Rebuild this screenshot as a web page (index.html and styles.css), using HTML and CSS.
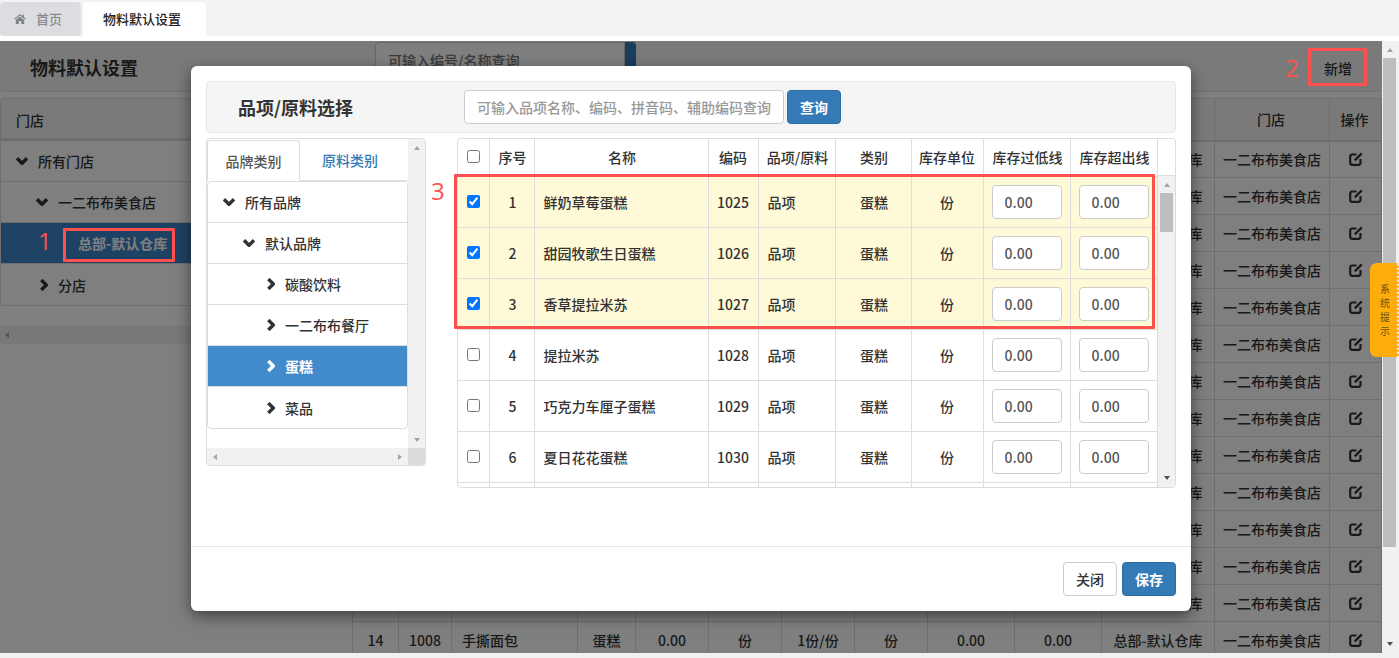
FILE: index.html
```html
<!DOCTYPE html>
<html lang="zh-CN">
<head>
  <meta charset="UTF-8">
  <meta name="viewport" content="width=device-width, initial-scale=1.0">
  <title>物料默认设置</title>
  <link rel="stylesheet" href="styles.css">
</head>
<body>
  <svg class="sprites" width="0" height="0" aria-hidden="true">
    <symbol id="chev-down" viewBox="0 0 12 8"><path d="M1 1.300 6 6.300l5-5" fill="none" stroke="currentColor" stroke-width="3.400"/></symbol>
    <symbol id="chev-right" viewBox="0 0 8 12"><path d="M1.300 1 6.300 6l-5 5" fill="none" stroke="currentColor" stroke-width="3.400"/></symbol>
    <symbol id="edit" viewBox="0 0 14 14"><path d="M7.500 2.500H3.200A2 2 0 0 0 1.200 4.500v6.300a2 2 0 0 0 2 2h6.300a2 2 0 0 0 2-2V7" fill="none" stroke="currentColor" stroke-width="2.200"/><path d="M5.800 8.400 12.800 1.400" fill="none" stroke="currentColor" stroke-width="2.200"/></symbol>
  </svg>

  <div class="app">
    <nav class="tabs">
      <a class="tab tab-home">
        <svg class="home-icon" viewBox="0 0 12 10"><path d="M6 0 0 5l.7.8L6 1.400l5.300 4.400.7-.8-2-1.700V.8H8.500v1.300zM1.800 6v4h3V7h2.400v3h3V6L6 2.500z" fill="currentColor"/></svg>
        首页
      </a>
      <a class="tab tab-active">物料默认设置</a>
    </nav>

    <div class="workspace">
      <main class="page">
        <header class="page-head">
          <h1>物料默认设置</h1>
          <div class="page-search">可输入编号/名称查询</div>
          <button class="page-search-btn"></button>
          <button class="add-btn">新增</button>
        </header>

        <div class="page-body">
          <section class="store-col">
            <div class="store-title">门店</div>
            <ul class="store-tree">
              <li><svg class="chev-d"><use href="#chev-down"/></svg>所有门店</li>
              <li class="lvl-1"><svg class="chev-d"><use href="#chev-down"/></svg>一二布布美食店</li>
              <li class="lvl-2 selected">总部-默认仓库</li>
              <li class="lvl-1b"><svg class="chev-r"><use href="#chev-right"/></svg>分店</li>
            </ul>
            <div class="store-scroll"><i class="arrow arrow-left"></i></div>
          </section>

          <table class="data-table">
            <colgroup>
              <col class="c46"><col class="c53"><col class="c126"><col class="c58"><col class="c73"><col class="c73"><col class="c73"><col class="c73"><col class="c87"><col class="c87"><col class="c113"><col class="c115"><col class="c52">
            </colgroup>
            <thead>
              <tr><th>序号</th><th>编码</th><th>名称</th><th>类别</th><th>库存</th><th>单位</th><th>规格</th><th>单位</th><th>过低线</th><th>超出线</th><th>仓库</th><th class="nudge">门店</th><th class="nudge">操作</th></tr>
            </thead>
            <tbody>
              <tr><td colspan="10"></td><td>总部-默认仓库</td><td>一二布布美食店</td><td><svg class="edit"><use href="#edit"/></svg></td></tr>
              <tr><td colspan="10"></td><td>总部-默认仓库</td><td>一二布布美食店</td><td><svg class="edit"><use href="#edit"/></svg></td></tr>
              <tr><td colspan="10"></td><td>总部-默认仓库</td><td>一二布布美食店</td><td><svg class="edit"><use href="#edit"/></svg></td></tr>
              <tr><td colspan="10"></td><td>总部-默认仓库</td><td>一二布布美食店</td><td><svg class="edit"><use href="#edit"/></svg></td></tr>
              <tr><td colspan="10"></td><td>总部-默认仓库</td><td>一二布布美食店</td><td><svg class="edit"><use href="#edit"/></svg></td></tr>
              <tr><td colspan="10"></td><td>总部-默认仓库</td><td>一二布布美食店</td><td><svg class="edit"><use href="#edit"/></svg></td></tr>
              <tr><td colspan="10"></td><td>总部-默认仓库</td><td>一二布布美食店</td><td><svg class="edit"><use href="#edit"/></svg></td></tr>
              <tr><td colspan="10"></td><td>总部-默认仓库</td><td>一二布布美食店</td><td><svg class="edit"><use href="#edit"/></svg></td></tr>
              <tr><td colspan="10"></td><td>总部-默认仓库</td><td>一二布布美食店</td><td><svg class="edit"><use href="#edit"/></svg></td></tr>
              <tr><td colspan="10"></td><td>总部-默认仓库</td><td>一二布布美食店</td><td><svg class="edit"><use href="#edit"/></svg></td></tr>
              <tr><td colspan="10"></td><td>总部-默认仓库</td><td>一二布布美食店</td><td><svg class="edit"><use href="#edit"/></svg></td></tr>
              <tr><td colspan="10"></td><td>总部-默认仓库</td><td>一二布布美食店</td><td><svg class="edit"><use href="#edit"/></svg></td></tr>
              <tr><td></td><td></td><td></td><td></td><td></td><td></td><td></td><td></td><td></td><td></td><td>总部-默认仓库</td><td>一二布布美食店</td><td><svg class="edit"><use href="#edit"/></svg></td></tr>
              <tr><td>14</td><td>1008</td><td class="left">手撕面包</td><td>蛋糕</td><td>0.00</td><td>份</td><td>1份/份</td><td>份</td><td>0.00</td><td>0.00</td><td>总部-默认仓库</td><td>一二布布美食店</td><td><svg class="edit"><use href="#edit"/></svg></td></tr>
            </tbody>
          </table>
        </div>
      </main>

      <div class="page-scroll">
        <i class="arrow arrow-up"></i>
        <div class="page-thumb"></div>
        <i class="arrow arrow-down dark"></i>
      </div>
    </div>

    <div class="backdrop"></div>

    <div class="modal">
      <div class="modal-body">
        <div class="search-panel">
          <h2>品项/原料选择</h2>
          <input class="search-input" type="text" placeholder="可输入品项名称、编码、拼音码、辅助编码查询">
          <button class="btn btn-primary">查询</button>
        </div>

        <div class="picker">
          <aside class="cat-panel">
            <div class="cat-content">
              <div class="cat-tabs">
                <a class="cat-tab active">品牌类别</a>
                <a class="cat-tab link">原料类别</a>
              </div>
              <ul class="cat-list">
                <li class="l0"><svg class="chev-d"><use href="#chev-down"/></svg>所有品牌</li>
                <li class="l1"><svg class="chev-d"><use href="#chev-down"/></svg>默认品牌</li>
                <li class="l2"><svg class="chev-r"><use href="#chev-right"/></svg>碳酸饮料</li>
                <li class="l2"><svg class="chev-r"><use href="#chev-right"/></svg>一二布布餐厅</li>
                <li class="l2 on"><svg class="chev-r"><use href="#chev-right"/></svg>蛋糕</li>
                <li class="l2"><svg class="chev-r"><use href="#chev-right"/></svg>菜品</li>
              </ul>
            </div>
            <div class="sb-v cat-sb">
              <i class="arrow arrow-up"></i>
              <i class="arrow arrow-down"></i>
            </div>
            <div class="sb-h">
              <i class="arrow arrow-left"></i>
              <i class="arrow arrow-right"></i>
            </div>
            <div class="sb-corner"></div>
          </aside>

          <section class="item-panel">
            <div class="item-clip">
              <table class="item-table">
                <colgroup>
                  <col class="i-check"><col class="i-no"><col class="i-name"><col class="i-code"><col class="i-type"><col class="i-cat"><col class="i-unit"><col class="i-low"><col class="i-high">
                </colgroup>
                <thead>
                  <tr><th><input type="checkbox"></th><th class="pad">序号</th><th class="pad">名称</th><th>编码</th><th class="pad">品项/原料</th><th class="pad">类别</th><th>库存单位</th><th class="pad">库存过低线</th><th class="pad">库存超出线</th></tr>
                </thead>
                <tbody>
                  <tr class="picked"><td><input type="checkbox" checked></td><td class="pad">1</td><td class="left">鲜奶草莓蛋糕</td><td>1025</td><td class="left">品项</td><td class="pad">蛋糕</td><td>份</td><td><input class="num" value="0.00"></td><td><input class="num" value="0.00"></td></tr>
                  <tr class="picked"><td><input type="checkbox" checked></td><td class="pad">2</td><td class="left">甜园牧歌生日蛋糕</td><td>1026</td><td class="left">品项</td><td class="pad">蛋糕</td><td>份</td><td><input class="num" value="0.00"></td><td><input class="num" value="0.00"></td></tr>
                  <tr class="picked"><td><input type="checkbox" checked></td><td class="pad">3</td><td class="left">香草提拉米苏</td><td>1027</td><td class="left">品项</td><td class="pad">蛋糕</td><td>份</td><td><input class="num" value="0.00"></td><td><input class="num" value="0.00"></td></tr>
                  <tr><td><input type="checkbox"></td><td class="pad">4</td><td class="left">提拉米苏</td><td>1028</td><td class="left">品项</td><td class="pad">蛋糕</td><td>份</td><td><input class="num" value="0.00"></td><td><input class="num" value="0.00"></td></tr>
                  <tr><td><input type="checkbox"></td><td class="pad">5</td><td class="left">巧克力车厘子蛋糕</td><td>1029</td><td class="left">品项</td><td class="pad">蛋糕</td><td>份</td><td><input class="num" value="0.00"></td><td><input class="num" value="0.00"></td></tr>
                  <tr><td><input type="checkbox"></td><td class="pad">6</td><td class="left">夏日花花蛋糕</td><td>1030</td><td class="left">品项</td><td class="pad">蛋糕</td><td>份</td><td><input class="num" value="0.00"></td><td><input class="num" value="0.00"></td></tr>
                  <tr><td></td><td></td><td></td><td></td><td></td><td></td><td></td><td></td><td></td></tr>
                </tbody>
              </table>
            </div>
            <div class="item-side">
              <div class="item-side-cap"></div>
              <div class="sb-v item-sb">
                <i class="arrow arrow-up"></i>
                <div class="item-thumb"></div>
                <i class="arrow arrow-down dark"></i>
              </div>
            </div>
          </section>
        </div>
      </div>
      <div class="modal-foot">
        <button class="btn btn-default">关闭</button>
        <button class="btn btn-primary">保存</button>
      </div>
    </div>

    <aside class="sys-tip">系<br>统<br>提<br>示</aside>

    <!-- 标注 -->
    <div class="mark mark-1"></div>
    <div class="mark mark-2"></div>
    <div class="mark mark-3"></div>
    <span class="mark-num num-1">1</span>
    <span class="mark-num num-2">2</span>
    <span class="mark-num num-3">3</span>
  </div>
</body>
</html>
```

FILE: styles.css
```css
* {
  box-sizing: border-box;
}

html, body {
  margin: 0;
  height: 100%;
  overflow: hidden;
}

body {
  font-family: "Noto Sans CJK SC", "Noto Sans", sans-serif;
  font-size: 14px;
  line-height: 20px;
  font-weight: 500;
  color: #333;
  background-color: #f1f1f1;
}

.sprites {
  position: absolute;
}

ul {
  list-style: none;
  margin: 0;
  padding: 0;
}

button, input {
  font-family: inherit;
  font-weight: 500;
}

.app {
  position: relative;
  width: 1399px;
  height: 658px;
  overflow: hidden;
}

/* 顶部标签 */
.tabs {
  display: flex;
  gap: 2px;
  height: 41px;
  padding-top: 2px;
  background-color: #f3f3f3;
  border-bottom: 5px solid #fff;
}

.tab {
  display: flex;
  align-items: center;
  height: 34px;
  font-size: 13px;
  border-radius: 4px 4px 0 0;
}

.tab-home {
  width: 81px;
  padding-left: 14px;
  background-color: #dcdde1;
  color: #8a8a8a;
  border-radius: 4px;
}

.home-icon {
  width: 12px;
  height: 10px;
  margin-right: 10px;
  color: #7f8389;
}

.tab-active {
  width: 123px;
  padding-left: 20px;
  background-color: #fff;
  color: #222;
}

/* 底层页面 */
.workspace {
  display: flex;
  align-items: flex-start;
  height: 612px;
}

.page {
  width: 1382px;
  height: 612px;
  overflow: hidden;
  background-color: #fff;
}

.page-head {
  display: flex;
  height: 51px;
  padding-top: 1px;
  background-color: #f5f5f5;
  border-bottom: 1px solid #e4e4e4;
  border-radius: 0 0 4px 4px;
}

.page-head h1 {
  width: 375px;
  margin: 0;
  padding: 8px 0 0 30px;
  font-size: 18px;
  line-height: 34px;
  font-weight: 700;
}

.page-search {
  width: 250px;
  height: 34px;
  padding: 7px 12px;
  background-color: #fff;
  border: 1px solid #ccc;
  border-radius: 4px 0 0 4px;
  color: #777;
}

.page-search-btn {
  width: 11px;
  height: 34px;
  padding: 0;
  border: none;
  background-color: #337ab7;
  border-radius: 0 4px 4px 0;
}

.add-btn {
  width: 54px;
  height: 34px;
  margin: 9px 17px 0 auto;
  padding: 0;
  font-size: 14px;
  color: #333;
  background-color: transparent;
  border: none;
}

.page-body {
  display: flex;
  gap: 7px;
  margin-top: 6px;
}

.store-col {
  width: 345px;
  flex-shrink: 0;
}

.store-title {
  height: 42px;
  padding: 11px 15px;
  background-color: #f5f5f5;
  border: 1px solid #ddd;
  border-bottom-width: 2px;
  border-radius: 4px 4px 0 0;
}

.store-tree {
  border: 1px solid #ddd;
  border-radius: 0 0 4px 4px;
}

.store-tree li {
  display: flex;
  align-items: center;
  height: 41px;
  padding-left: 15px;
  border-bottom: 1px solid #ddd;
}

.store-tree li:last-child {
  border-bottom: none;
}

.store-tree .lvl-1 {
  padding-left: 35px;
}

.store-tree .lvl-1b {
  padding-left: 39px;
}

.store-tree .lvl-2 {
  padding-left: 77px;
}

.store-tree .selected {
  background-color: #3d85c6;
  color: #fff;
  font-weight: 700;
}

.store-scroll {
  display: flex;
  align-items: center;
  height: 18px;
  margin-top: 20px;
  padding-left: 5px;
  background-color: #f1f1f1;
}

.data-table {
  width: 1029px;
  flex-shrink: 0;
  table-layout: fixed;
  border-collapse: collapse;
}

.data-table th,
.data-table td {
  height: 37px;
  padding: 0;
  font-weight: 500;
  text-align: center;
  border: 1px solid #ddd;
  overflow: hidden;
  white-space: nowrap;
}

.data-table th {
  height: 42px;
  background-color: #f5f5f5;
  border-bottom-width: 2px;
}

.data-table .nudge {
  padding-right: 2px;
}

.data-table .left {
  text-align: left;
  padding-left: 10px;
}

.c46 { width: 46px; }
.c53 { width: 53px; }
.c52 { width: 52px; }
.c58 { width: 58px; }
.c73 { width: 73px; }
.c87 { width: 87px; }
.c113 { width: 113px; }
.c115 { width: 115px; }
.c126 { width: 126px; }

.edit {
  display: block;
  width: 14px;
  height: 14px;
  margin: 0 auto;
  color: #333;
}

.page-scroll {
  display: flex;
  flex-direction: column;
  align-items: center;
  width: 17px;
  height: 612px;
  padding: 7px 2px 0 0;
  background-color: #f1f1f1;
}

.page-thumb {
  width: 13px;
  height: 489px;
  margin: 6px 0 95px;
  background-color: #bdbdbd;
}

/* 滚动条箭头 */
.arrow {
  display: block;
  width: 0;
  height: 0;
  border-style: solid;
  border-color: transparent;
  flex-shrink: 0;
}

.arrow-up {
  border-width: 0 3.5px 4px;
  border-bottom-color: #a3a3a3;
}

.arrow-down {
  border-width: 4px 3.5px 0;
  border-top-color: #a3a3a3;
}

.arrow-left {
  border-width: 3.5px 4px 3.5px 0;
  border-right-color: #a3a3a3;
}

.arrow-right {
  border-width: 3.5px 0 3.5px 4px;
  border-left-color: #a3a3a3;
}

.arrow-down.dark {
  border-top-color: #505050;
}

.backdrop {
  position: absolute;
  top: 41px;
  left: 0;
  width: 1382px;
  height: 612px;
  background-color: rgba(0, 0, 0, 0.5);
}

/* 弹窗 */
.modal {
  position: absolute;
  top: 66px;
  left: 191px;
  width: 1000px;
  height: 545px;
  background-color: #fff;
  border-radius: 6px;
  box-shadow: 0 5px 15px rgba(0, 0, 0, 0.5);
}

.modal-body {
  height: 481px;
  padding: 15px;
  border-bottom: 1px solid #e5e5e5;
}

.search-panel {
  display: flex;
  align-items: center;
  height: 52px;
  background-color: #f5f5f5;
  border: 1px solid #e7e7e7;
  border-radius: 4px;
}

.search-panel h2 {
  width: 257px;
  margin: 0;
  padding-left: 31px;
  font-size: 18px;
  font-weight: 700;
}

.search-input {
  width: 320px;
  height: 34px;
  padding: 6px 12px;
  margin-right: 3px;
  font-size: 14px;
  color: #555;
  background-color: #fff;
  border: 1px solid #ccc;
  border-radius: 4px;
  outline: none;
}

.search-input::placeholder {
  color: #999;
}

.btn {
  width: 54px;
  height: 34px;
  padding: 0;
  font-size: 14px;
  border-radius: 4px;
  border: 1px solid #ccc;
}

.btn-primary {
  color: #fff;
  font-weight: 700;
  background-color: #337ab7;
  border-color: #2e6da4;
}

.btn-default {
  color: #333;
  background-color: #fff;
}

.picker {
  display: flex;
  align-items: flex-start;
  gap: 31px;
  margin-top: 5px;
}

.cat-panel {
  display: grid;
  grid-template-columns: 201px 17px;
  grid-template-rows: 309px 17px;
  width: 220px;
  height: 328px;
  border: 1px solid #ddd;
  border-radius: 4px;
  overflow: hidden;
}

.cat-content {
  padding-top: 1px;
}

.cat-tabs {
  display: flex;
  height: 41px;
  border-bottom: 1px solid #ddd;
}

.cat-tab {
  display: flex;
  align-items: center;
  justify-content: center;
  width: 108px;
  padding-right: 8px;
  color: #555;
}

.cat-tab.active {
  width: 93px;
  height: 41px;
  padding-right: 0;
  border: 1px solid #ddd;
  border-bottom-color: #fff;
  border-radius: 4px 4px 0 0;
}

.cat-tab.link {
  color: #337ab7;
}

.cat-list {
  border: 1px solid #ddd;
  border-radius: 4px;
}

.cat-list li {
  display: flex;
  align-items: center;
  height: 41px;
  border-bottom: 1px solid #ddd;
}

.cat-list li:last-child {
  border-bottom: none;
}

.cat-list .l0 {
  padding-left: 15px;
}

.cat-list .l1 {
  padding-left: 35px;
}

.cat-list .l2 {
  padding-left: 59px;
}

.cat-list .on {
  background-color: #428bca;
  color: #fff;
  font-weight: 700;
}

.chev-d {
  width: 12px;
  height: 8px;
  margin-right: 10px;
  flex-shrink: 0;
}

.chev-r {
  width: 8px;
  height: 12px;
  margin-right: 10px;
  flex-shrink: 0;
}

.sb-v {
  display: flex;
  flex-direction: column;
  align-items: center;
  justify-content: space-between;
  background-color: #f1f1f1;
}

.cat-sb {
  padding: 7px 0 6px;
}

.sb-h {
  display: flex;
  align-items: center;
  justify-content: space-between;
  padding: 0 6px;
  background-color: #f1f1f1;
}

.sb-corner {
  background-color: #dcdcdc;
}

.item-panel {
  display: flex;
  width: 719px;
  height: 350px;
  border: 1px solid #ddd;
  border-radius: 4px;
  overflow: hidden;
}

.item-clip {
  width: 700px;
  height: 348px;
  overflow: hidden;
}

.item-table {
  width: 699px;
  table-layout: fixed;
  border-collapse: collapse;
}

.item-table th,
.item-table td {
  padding: 0;
  font-weight: 500;
  text-align: center;
  border: 1px solid #ddd;
  white-space: nowrap;
}

.item-table tr > :first-child {
  border-left: none;
}

.item-table th {
  height: 37px;
  border-top: none;
  border-bottom-width: 1px;
}

.item-table td {
  height: 51px;
}

.item-table .pad {
  padding-left: 2px;
}

.item-table .left {
  text-align: left;
  padding-left: 9px;
}

.item-table input[type="checkbox"] {
  display: block;
  width: 13px;
  height: 13px;
  margin: -1px 0 0 9px;
}

.picked td {
  background-color: #fef9d7;
}

.num {
  display: block;
  width: 70px;
  height: 34px;
  margin: 0 auto;
  padding: 0 12px;
  font-size: 14px;
  color: #555;
  background-color: #fff;
  border: 1px solid #ccc;
  border-radius: 4px;
  outline: none;
}

.i-check { width: 31px; }
.i-no { width: 45px; }
.i-name { width: 174px; }
.i-code { width: 50px; }
.i-type { width: 77px; }
.i-cat { width: 76px; }
.i-unit { width: 72px; }
.i-low { width: 87px; }
.i-high { width: 87px; }

.item-side {
  width: 17px;
}

.item-side-cap {
  height: 37px;
  border-bottom: 1px solid #ddd;
}

.item-sb {
  height: 311px;
  padding: 7px 0 0;
  justify-content: flex-start;
}

.item-thumb {
  width: 13px;
  height: 39px;
  margin: 6px 0 244px;
  background-color: #bdbdbd;
}

.modal-foot {
  display: flex;
  justify-content: flex-end;
  gap: 5px;
  padding: 15px;
}

/* 系统提示 */
.sys-tip {
  position: absolute;
  top: 263px;
  left: 1370px;
  width: 29px;
  height: 94px;
  padding: 19px 0 0 10px;
  font-size: 10px;
  line-height: 14px;
  font-weight: 400;
  color: #6b5210;
  background-color: #ffad0d;
  background-clip: padding-box;
  border-right: 2px dotted #ffad0d;
  border-radius: 6px 2px 2px 6px;
}

/* 标注 */
.mark {
  position: absolute;
  border: 3px solid #ff5050;
  border-radius: 1px;
}

.mark-1 {
  top: 228px;
  left: 63px;
  width: 112px;
  height: 34px;
}

.mark-2 {
  top: 48px;
  left: 1308px;
  width: 59px;
  height: 38px;
}

.mark-3 {
  top: 174px;
  left: 454px;
  width: 701px;
  height: 155px;
}

.mark-num {
  position: absolute;
  font-family: "Open Sans", sans-serif;
  font-size: 24px;
  line-height: 28px;
  font-weight: 400;
  color: #ff5050;
}

.num-1 {
  top: 227px;
  left: 38px;
}

.num-2 {
  top: 54px;
  left: 1285px;
}

.num-3 {
  top: 177px;
  left: 431px;
}
```
